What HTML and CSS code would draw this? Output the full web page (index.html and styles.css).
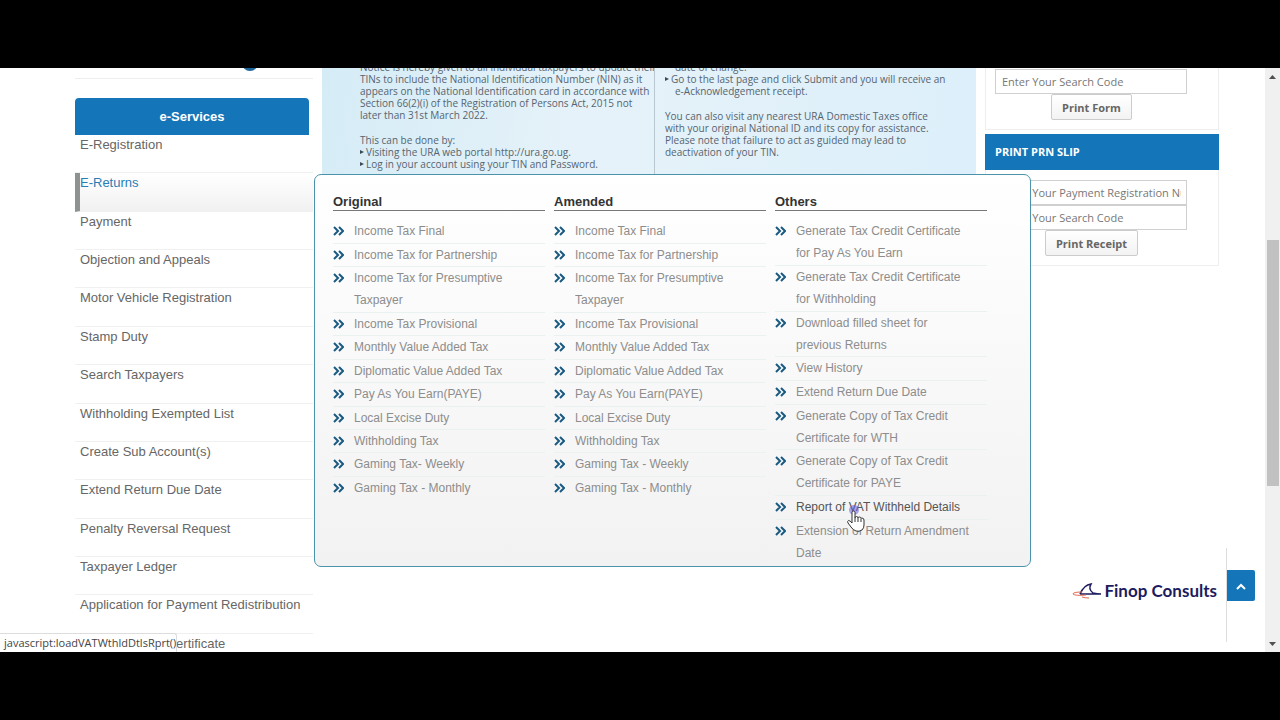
FILE: index.html
```html
<!DOCTYPE html>
<html lang="en">
<head>
  <meta charset="UTF-8">
  <meta name="viewport" content="width=device-width, initial-scale=1.0">
  <title>e-Services</title>

  <link rel="stylesheet" href="styles.css">
</head>

<body>
  <!-- chevron used by every submenu link -->
  <svg class="defs" aria-hidden="true">
    <symbol id="chev" viewBox="0 0 11 10">
      <path d="M1 1 L5 5 L1 9 M6 1 L10 5 L6 9" fill="none" stroke="#1a5a80" stroke-width="2"/>
    </symbol>
  </svg>

  <div class="screen">
    <main class="page">

      <!-- left menu -->
      <nav class="side">
        <div class="side-top"><span class="dot"></span></div>
        <h2 class="side-title">e-Services</h2>
        <ul class="side-list">
          <li><a href="#">E-Registration</a></li>
          <li class="on">
            <a href="#">E-Returns</a>

            <!-- submenu -->
            <div class="drop">
              <section class="drop-col">
                <h3>Original</h3>
                <ul class="links">
                  <li><svg class="chev"><use href="#chev"/></svg><a href="#">Income Tax Final</a></li>
                  <li><svg class="chev"><use href="#chev"/></svg><a href="#">Income Tax for Partnership</a></li>
                  <li><svg class="chev"><use href="#chev"/></svg><a href="#">Income Tax for Presumptive Taxpayer</a></li>
                  <li><svg class="chev"><use href="#chev"/></svg><a href="#">Income Tax Provisional</a></li>
                  <li><svg class="chev"><use href="#chev"/></svg><a href="#">Monthly Value Added Tax</a></li>
                  <li><svg class="chev"><use href="#chev"/></svg><a href="#">Diplomatic Value Added Tax</a></li>
                  <li><svg class="chev"><use href="#chev"/></svg><a href="#">Pay As You Earn(PAYE)</a></li>
                  <li><svg class="chev"><use href="#chev"/></svg><a href="#">Local Excise Duty</a></li>
                  <li><svg class="chev"><use href="#chev"/></svg><a href="#">Withholding Tax</a></li>
                  <li><svg class="chev"><use href="#chev"/></svg><a href="#">Gaming Tax- Weekly</a></li>
                  <li><svg class="chev"><use href="#chev"/></svg><a href="#">Gaming Tax - Monthly</a></li>
                </ul>
              </section>

              <section class="drop-col">
                <h3>Amended</h3>
                <ul class="links">
                  <li><svg class="chev"><use href="#chev"/></svg><a href="#">Income Tax Final</a></li>
                  <li><svg class="chev"><use href="#chev"/></svg><a href="#">Income Tax for Partnership</a></li>
                  <li><svg class="chev"><use href="#chev"/></svg><a href="#">Income Tax for Presumptive Taxpayer</a></li>
                  <li><svg class="chev"><use href="#chev"/></svg><a href="#">Income Tax Provisional</a></li>
                  <li><svg class="chev"><use href="#chev"/></svg><a href="#">Monthly Value Added Tax</a></li>
                  <li><svg class="chev"><use href="#chev"/></svg><a href="#">Diplomatic Value Added Tax</a></li>
                  <li><svg class="chev"><use href="#chev"/></svg><a href="#">Pay As You Earn(PAYE)</a></li>
                  <li><svg class="chev"><use href="#chev"/></svg><a href="#">Local Excise Duty</a></li>
                  <li><svg class="chev"><use href="#chev"/></svg><a href="#">Withholding Tax</a></li>
                  <li><svg class="chev"><use href="#chev"/></svg><a href="#">Gaming Tax - Weekly</a></li>
                  <li><svg class="chev"><use href="#chev"/></svg><a href="#">Gaming Tax - Monthly</a></li>
                </ul>
              </section>

              <section class="drop-col">
                <h3>Others</h3>
                <ul class="links long">
                  <li><svg class="chev"><use href="#chev"/></svg><a href="#">Generate Tax Credit Certificate for Pay As You Earn</a></li>
                  <li><svg class="chev"><use href="#chev"/></svg><a href="#">Generate Tax Credit Certificate for Withholding</a></li>
                  <li><svg class="chev"><use href="#chev"/></svg><a href="#">Download filled sheet for previous Returns</a></li>
                  <li><svg class="chev"><use href="#chev"/></svg><a href="#">View History</a></li>
                  <li><svg class="chev"><use href="#chev"/></svg><a href="#">Extend Return Due Date</a></li>
                  <li><svg class="chev"><use href="#chev"/></svg><a href="#">Generate Copy of Tax Credit Certificate for WTH</a></li>
                  <li><svg class="chev"><use href="#chev"/></svg><a href="#">Generate Copy of Tax Credit Certificate for PAYE</a></li>
                  <li class="hover">
                    <svg class="chev"><use href="#chev"/></svg><a href="#">Report of VAT Withheld Details</a>
                    <!-- pointer -->
                    <svg class="hand" viewBox="0 0 20 30" aria-hidden="true">
                      <circle cx="8" cy="6" r="5" fill="#5a50e0" opacity=".5"/>
                      <path d="M6 19 V8.500 Q6 7 7.500 7 Q9 7 9 8.500 V14 Q9 12.500 10.500 12.500 Q12 12.500 12 14 Q12 13 13.500 13 Q15 13 15 14.500 Q15 14 16 14 Q18 14.300 18 16 V21 Q18 24 16 26 Q13 28 10 27 Q7 26 5 23 L2 19 Q1 17 2.500 16.500 Q4 16.400 6 19 Z" fill="#fff" stroke="#333" stroke-width="1"/>
                      <path d="M9 14 V18 M12 14 V18 M15 15 V18" stroke="#333" stroke-width="1"/>
                    </svg>
                  </li>
                  <li><svg class="chev"><use href="#chev"/></svg><a href="#">Extension of Return Amendment Date</a></li>
                </ul>
              </section>
            </div>
          </li>
          <li><a href="#">Payment</a></li>
          <li><a href="#">Objection and Appeals</a></li>
          <li><a href="#">Motor Vehicle Registration</a></li>
          <li><a href="#">Stamp Duty</a></li>
          <li><a href="#">Search Taxpayers</a></li>
          <li><a href="#">Withholding Exempted List</a></li>
          <li><a href="#">Create Sub Account(s)</a></li>
          <li><a href="#">Extend Return Due Date</a></li>
          <li><a href="#">Penalty Reversal Request</a></li>
          <li><a href="#">Taxpayer Ledger</a></li>
          <li><a href="#">Application for Payment Redistribution</a></li>
          <li><a href="#">Tax Clearance Certificate</a></li>
        </ul>
      </nav>

      <!-- notice poster -->
      <article class="poster">
        <div class="poster-col">
          <p>Notice is hereby given to all individual taxpayers to update their<br>
            TINs to include the National Identification Number (NIN) as it<br>
            appears on the National Identification card in accordance with<br>
            Section 66(2)(i) of the Registration of Persons Act, 2015 not<br>
            later than 31st March 2022.</p>
          <p class="lead">This can be done by:</p>
          <ul>
            <li>Visiting the URA web portal http://ura.go.ug.</li>
            <li>Log in your account using your TIN and Password.</li>
          </ul>
        </div>
        <div class="poster-col">
          <ul>
            <li class="cont">date of change.</li>
            <li>Go to the last page and click Submit and you will receive an</li>
            <li class="cont">e-Acknowledgement receipt.</li>
          </ul>
          <p>You can also visit any nearest URA Domestic Taxes office<br>
            with your original National ID and its copy for assistance.<br>
            Please note that failure to act as guided may lead to<br>
            deactivation of your TIN.</p>
        </div>
      </article>

      <!-- right forms -->
      <aside class="forms">
        <form class="box">
          <input type="text" aria-label="Search code" placeholder="Enter Your Search Code">
          <button type="button">Print Form</button>
        </form>
        <h2 class="forms-title">PRINT PRN SLIP</h2>
        <form class="box second">
          <input type="text" aria-label="Payment registration number" placeholder="Enter Your Payment Registration Number">
          <input type="text" aria-label="PRN search code" placeholder="Enter Your Search Code">
          <button type="button">Print Receipt</button>
        </form>
      </aside>

      <div class="status">javascript:loadVATWthldDtlsRprt()</div>

      <div class="corner">
        <div class="brand">
          <svg width="30" height="18" viewBox="0 0 30 18" aria-hidden="true">
            <path d="M8 12 Q12 3 19 2 Q16 7 21 11 Q25 12 29 12 H8" fill="none" stroke="#1d1b5e" stroke-width="1.500"/>
            <path d="M10 10 Q1 10 1 12 Q3 14 14 13 M10 15 Q13 16 17 16" fill="none" stroke="#e0694f" stroke-width="1"/>
          </svg>
          <span>Finop Consults</span>
        </div>
        <div class="rail">
          <button type="button" class="totop" aria-label="Back to top">
            <svg width="10" height="7" viewBox="0 0 10 7"><path d="M1 6 L5 2 L9 6" fill="none" stroke="#fff" stroke-width="2"/></svg>
          </button>
        </div>
      </div>
    </main>

    <div class="scroll">
      <svg width="7" height="4" viewBox="0 0 7 4"><path d="M0 4 L3.500 0 L7 4 Z" fill="#505050"/></svg>
      <span class="thumb"></span>
      <svg width="7" height="4" viewBox="0 0 7 4"><path d="M0 0 L3.500 4 L7 0 Z" fill="#505050"/></svg>
    </div>
  </div>
</body>
</html>
```

FILE: styles.css
```css
*{
  box-sizing: border-box;
}
html, body{
  margin: 0;
  padding: 0;
  height: 100%;
}
body{
  padding: 68px 0;
  background: #000;
  font: 13px/20px "Liberation Sans", Arial, sans-serif;
  color: #666;
  overflow: hidden;
}
ul, p, h2, h3{
  margin: 0;
  padding: 0;
  list-style: none;
}
a{
  color: inherit;
  text-decoration: none;
}
.defs{
  position: absolute;
  width: 0;
  height: 0;
}

.screen{
  display: flex;
  height: 100%;
  background: #fff;
}
.page{
  flex: 1;
  position: relative;
  display: flex;
  align-items: flex-start;
  gap: 9px;
  padding: 0 46px 0 75px;
  overflow: hidden;
}

/* left menu */
.side{
  width: 238px;
  flex-shrink: 0;
}
.side-top{
  height: 11px;
  margin-bottom: 19px;
  border-bottom: 1px solid #eee;
  overflow: hidden;
}
.dot{
  display: block;
  width: 16px;
  height: 16px;
  margin: -13px 0 0 167px;
  border-radius: 50%;
  background: #1a659c;
}
.side-title{
  margin-right: 4px;
  border-radius: 4px 4px 0 0;
  background: #1575b9;
  color: #fff;
  font-size: 13px;
  line-height: 37px;
  text-align: center;
}
/* rows share the list height evenly */
.side-list{
  display: flex;
  flex-direction: column;
  height: 537px;
}
.side-list>li{
  flex: 1;
  padding-left: 5px;
  border-bottom: 1px solid #f0f0f0;
}
.side-list>.on{
  position: relative;
  padding-left: 0;
  border-left: 5px solid #8e9392;
  background: linear-gradient(#fff, #f1f1f1);
}
.on>a{
  color: #2a7db5;
}

/* submenu */
.drop{
  position: absolute;
  z-index: 2;
  top: 1px;
  left: 234px;
  display: flex;
  gap: 9px;
  width: 717px;
  padding: 18px 18px 0;
  height: 393px;
  border: 1px solid #4a93ab;
  border-radius: 7px;
  background: linear-gradient(#fff, #f2f2f2);
}
.drop-col{
  width: 212px;
}
.drop-col h3{
  margin-bottom: 9px;
  border-bottom: 1px solid #777;
  color: #333;
  font-size: 13px;
  line-height: 17px;
}
.links{
  display: flex;
  flex-direction: column;
  min-height: 280px;
}
.links.long{
  min-height: 345px;
}
.links li{
  flex: 1 0 auto;
  position: relative;
  display: flex;
  align-items: flex-start;
  gap: 10px;
  padding-right: 14px;
  border-bottom: 1px solid #e9f1f1;
  color: #8d8d8d;
  font-size: 12px;
  line-height: 22px;
}
.links li:last-child{
  border-bottom-color: transparent;
}
.links .hover{
  color: #555;
}
.chev{
  flex-shrink: 0;
  width: 11px;
  height: 10px;
  margin-top: 6px;
}
.hand{
  position: absolute;
  z-index: 1;
  left: 71px;
  top: 8px;
  width: 20px;
  height: 30px;
}

/* poster */
.poster{
  flex: 1;
  display: flex;
  height: 150px;
  overflow: hidden;
  background: linear-gradient(100deg, #d5ecf6, #e6f2f9 40%, #dceffa);
  color: #566470;
  font: 10px/12px "Open Sans", "Noto Sans", sans-serif;
  white-space: nowrap;
}
.poster-col{
  flex: 0 0 332px;
  min-width: 0;
  margin-top: -7px;
  padding-left: 38px;
}
.poster-col+.poster-col{
  flex: 1;
  padding-left: 10px;
  border-left: 1px solid #b9c7d0;
}
.poster-col p,
.poster-col ul{
  margin-bottom: 13px;
}
.poster-col .lead{
  margin-bottom: 0;
}
.poster-col li{
  display: flex;
  align-items: center;
  gap: 2px;
}
.poster-col li::before{
  content: "";
  border: 2px solid transparent;
  border-left: 4px solid #3c4a55;
  border-right: 0;
}
.poster-col .cont{
  padding-left: 10px;
}
.poster-col .cont::before{
  content: none;
}

/* right forms */
.forms{
  width: 234px;
  flex-shrink: 0;
  color: #666;
  font-family: "Open Sans", "Noto Sans", sans-serif;
}
.box{
  display: flex;
  flex-direction: column;
  align-items: flex-start;
  padding: 1px 9px 9px;
  border: 1px solid #eee;
  border-top: 0;
}
.box.second{
  padding-top: 10px;
}
.box input{
  width: 192px;
  height: 25px;
  padding: 0 5px 0 6px;
  border: 1px solid #d0d0d0;
  background: #fff;
  font: 11px "Open Sans", "Noto Sans", sans-serif;
}
.box input::placeholder{
  color: #777;
}
.box button{
  align-self: center;
  margin-right: 21px;
  height: 26px;
  padding: 1px 10px 0;
  border: 1px solid #ccc;
  border-radius: 2px;
  background: linear-gradient(#fff, #f3f3f3);
  color: #666;
  font: bold 11px "Open Sans", "Noto Sans", sans-serif;
}
.forms-title{
  margin-top: 4px;
  padding-left: 10px;
  background: #1575b9;
  color: #fff;
  font-size: 11px;
  line-height: 36px;
}

/* link preview of the browser */
.status{
  position: absolute;
  left: 0;
  bottom: 0;
  width: 177px;
  padding-left: 4px;
  border-top: 1px solid #ddd;
  border-right: 1px solid #ddd;
  border-radius: 0 3px 0 0;
  background: #fff;
  color: #444;
  font: 11px/18px "Open Sans", "Noto Sans", sans-serif;
}

.corner{
  position: absolute;
  right: 10px;
  bottom: 10px;
  display: flex;
  align-items: center;
}
.brand{
  display: flex;
  align-items: center;
  gap: 2px;
  margin-right: 9px;
  padding-bottom: 8px;
  color: #1d1b5e;
  font: bold 17px/20px Lato, sans-serif;
}
.rail{
  height: 94px;
  padding-top: 22px;
  border-left: 1px solid #ddd;
}
.totop{
  display: block;
  width: 28px;
  height: 31px;
  padding: 0;
  border: 0;
  border-radius: 0 2px 2px 0;
  background: #1575b9;
}

/* scrollbar */
.scroll{
  display: flex;
  flex-direction: column;
  align-items: center;
  width: 15px;
  padding: 7px 0 6px;
  background: #f0f0f0;
}
.thumb{
  width: 12px;
  height: 246px;
  margin: 161px 0 auto;
  background: #c1c1c1;
}
```
